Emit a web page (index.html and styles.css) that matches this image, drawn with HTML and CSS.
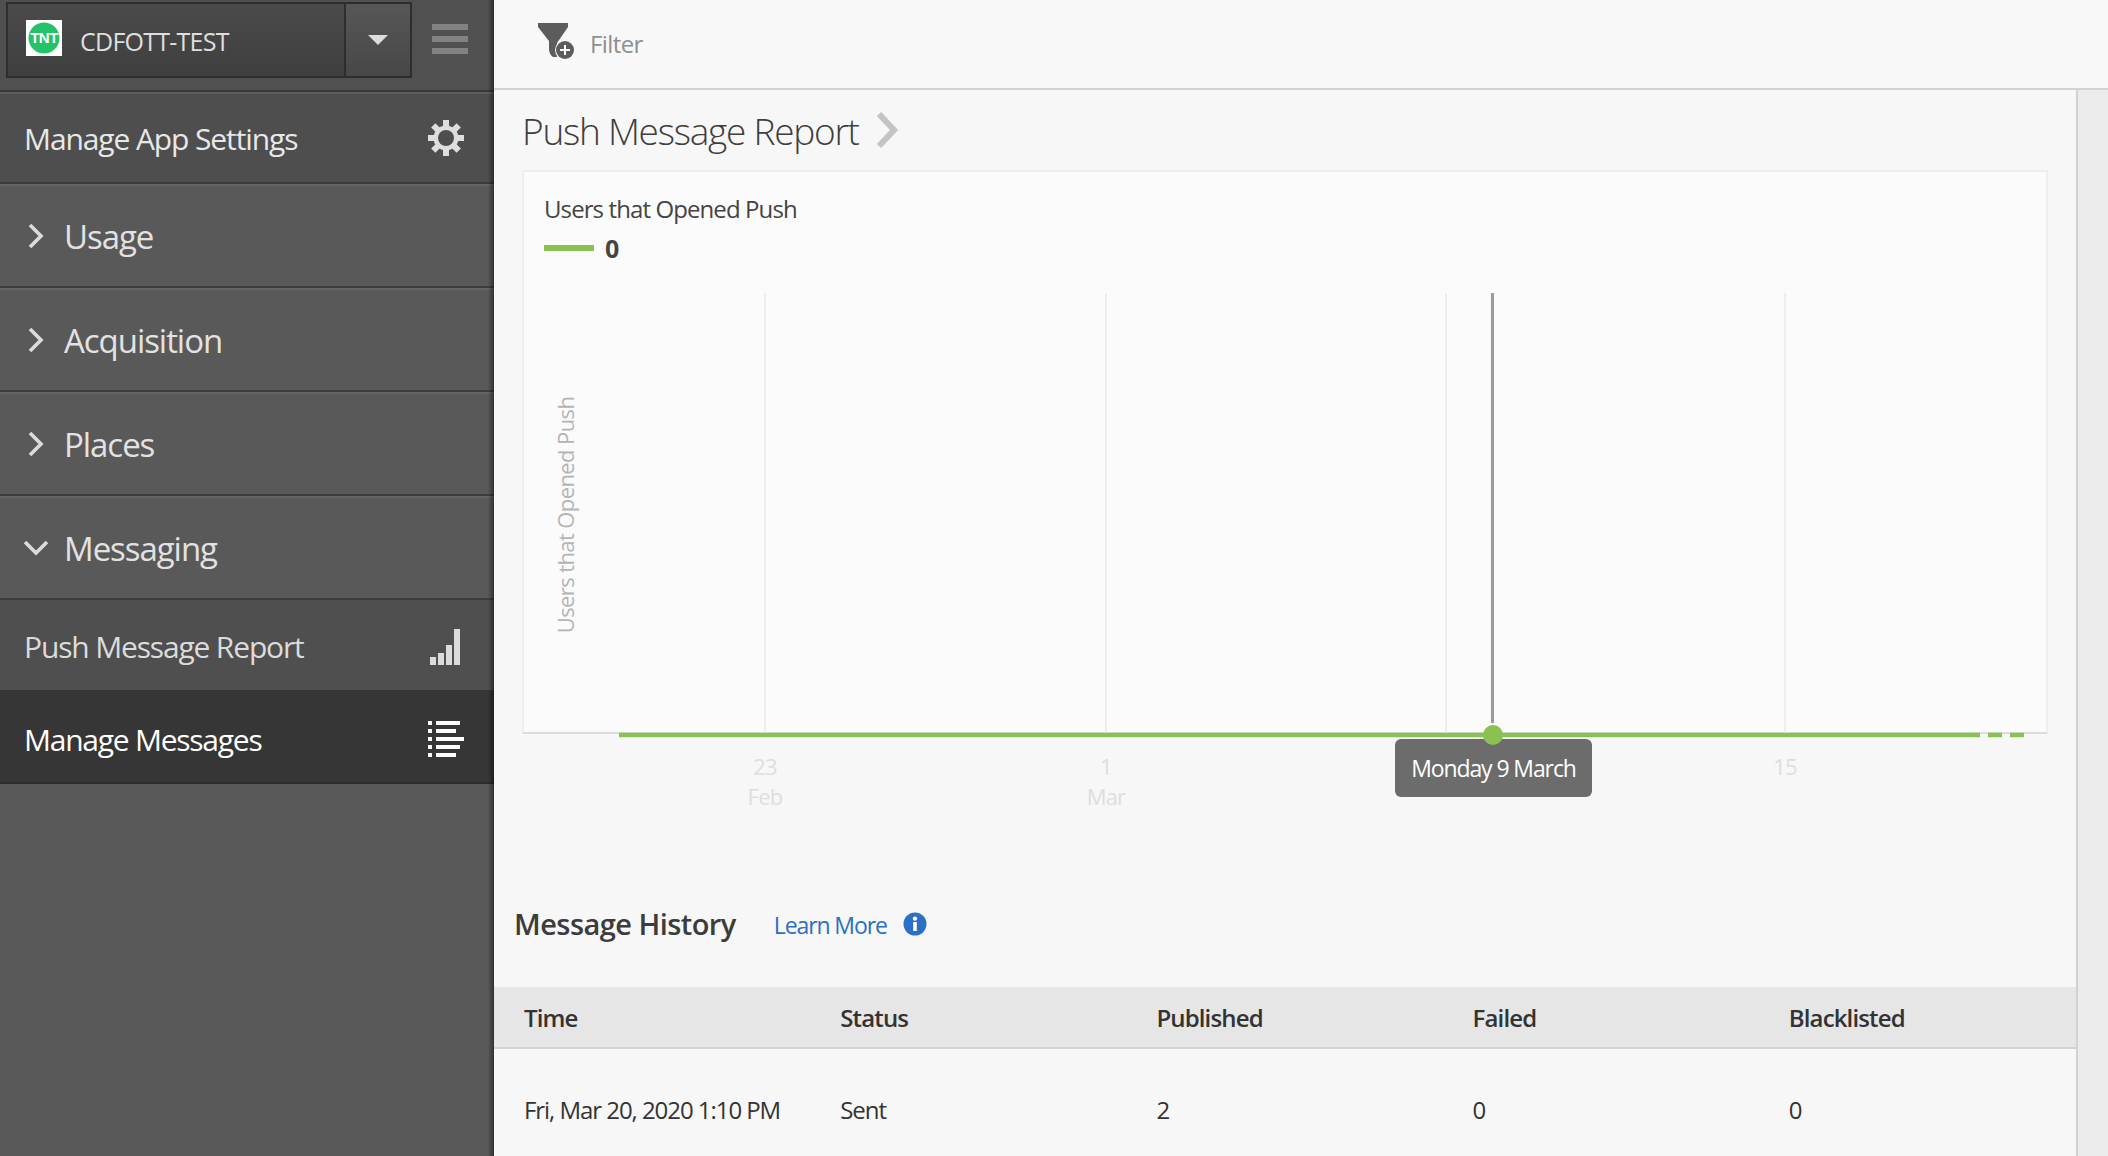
FILE: index.html
```html
<!DOCTYPE html>
<html lang="en">
<head>
<meta charset="utf-8">
<title>Push Message Report</title>
<link rel="stylesheet" href="styles.css">
</head>
<body>
<div class="app">
  <aside class="sidebar">
    <div class="side-head">
      <div class="select">
        <div class="select-value">
          <svg class="logo" viewBox="0 0 36 36"><rect width="36" height="36" fill="#fff"/><circle cx="18" cy="18" r="15.5" fill="#25c26c"/><text x="18" y="23" text-anchor="middle" class="logo-text">TNT</text></svg>
          <span class="select-name">CDFOTT-TEST</span>
        </div>
        <div class="select-btn"><svg width="20" height="10" viewBox="0 0 20 10"><path d="M0 0H20L10 10Z" fill="#dcdcdc"/></svg></div>
      </div>
      <svg class="burger" width="36" height="30" viewBox="0 0 36 30"><path d="M0 0H36V6H0ZM0 12H36V18H0ZM0 24H36V30H0Z" fill="#828282"/></svg>
    </div>
    <div class="row row-settings">
      <span>Manage App Settings</span>
      <svg class="row-icon" width="36" height="36" viewBox="0 0 36 36"><g fill="#dedede"><rect x="15" y="0" width="6" height="36"/><rect x="15" y="0" width="6" height="36" transform="rotate(45 18 18)"/><rect x="15" y="0" width="6" height="36" transform="rotate(90 18 18)"/><rect x="15" y="0" width="6" height="36" transform="rotate(135 18 18)"/></g><circle cx="18" cy="18" r="12.5" fill="#dedede"/><circle cx="18" cy="18" r="8" fill="#4e4e4e"/></svg>
    </div>
    <div class="row row-nav"><svg class="chev" width="24" height="26" viewBox="0 0 24 26"><path d="M6 2L17 13L6 24" fill="none" stroke="#dcdcdc" stroke-width="3.6"/></svg><span>Usage</span></div>
    <div class="row row-nav"><svg class="chev" width="24" height="26" viewBox="0 0 24 26"><path d="M6 2L17 13L6 24" fill="none" stroke="#dcdcdc" stroke-width="3.6"/></svg><span>Acquisition</span></div>
    <div class="row row-nav"><svg class="chev" width="24" height="26" viewBox="0 0 24 26"><path d="M6 2L17 13L6 24" fill="none" stroke="#dcdcdc" stroke-width="3.6"/></svg><span>Places</span></div>
    <div class="row row-nav"><svg class="chev" width="24" height="26" viewBox="0 0 24 26"><path d="M1 7L12 18L23 7" fill="none" stroke="#dcdcdc" stroke-width="3.6"/></svg><span>Messaging</span></div>
    <div class="row row-sub">
      <span>Push Message Report</span>
      <svg class="row-icon" width="36" height="36" viewBox="0 0 36 36"><path d="M2 28H8V36H2ZM10 24H16V36H10ZM18 16H24V36H18ZM26 0H32V36H26Z" fill="#dcdcdc"/></svg>
    </div>
    <div class="row row-active">
      <span>Manage Messages</span>
      <svg class="row-icon" width="36" height="36" viewBox="0 0 36 36"><path d="M0 0H4V4H0ZM8 0H32V4H8ZM0 8H4V12H0ZM8 8H28V12H8ZM0 16H4V20H0ZM8 16H36V20H8ZM0 24H4V28H0ZM8 24H32V28H8ZM0 32H4V36H0ZM8 32H28V36H8Z" fill="#fff"/></svg>
    </div>
  </aside>
  <div class="main">
    <header class="toolbar">
      <svg class="funnel" width="40" height="40" viewBox="0 0 40 40"><path d="M0 2H30V6L19 22V36H15Q11 33 11 28V20L0 6Z" fill="#5c5c5c"/><circle cx="27" cy="29" r="10" fill="#f8f8f8"/><circle cx="27" cy="29" r="9" fill="#5c5c5c"/><path d="M26 24H28V28H32V30H28V34H26V30H22V28H26Z" fill="#fff"/></svg>
      <span class="filter-label">Filter</span>
    </header>
    <div class="content-wrap">
      <div class="content">
        <div class="title-row">
          <h1 class="title">Push Message Report</h1>
          <svg width="24" height="36" viewBox="0 0 24 36"><path d="M4 2L19 18L4 34" fill="none" stroke="#c4c4c4" stroke-width="6"/></svg>
        </div>
        <section class="chart-card">
          <div class="card-head">
            <div class="card-title">Users that Opened Push</div>
            <div class="legend"><span class="legend-line"></span><span class="legend-value">0</span></div>
          </div>
          <div class="plot">
            <svg class="plot-svg" width="1521" height="440" viewBox="0 0 1521 440">
              <g stroke="#ededed" stroke-width="2">
                <path d="M240 0V440M581 0V440M921 0V440M1260 0V440"/>
              </g>
              <text class="axis-y" transform="translate(49 222) rotate(-90)" text-anchor="middle">Users that Opened Push</text>
              <path d="M967.5 0V430" stroke="#9a9a9a" stroke-width="3"/>
              <path d="M94 442H1455M1463 442H1477M1485 442H1499" stroke="#8bc152" stroke-width="4.5" fill="none"/>
              <g class="axis-x" text-anchor="middle">
                <text x="240" y="482">23</text><text x="240" y="512">Feb</text>
                <text x="581" y="482">1</text><text x="581" y="512">Mar</text>
                <text x="921" y="482">9</text>
                <text x="1260" y="482">15</text>
              </g>
              <rect class="tip-box" x="870" y="446" width="197" height="58" rx="6"/>
              <text class="tip-text" x="968.5" y="484" text-anchor="middle">Monday 9 March</text>
              <ellipse cx="968" cy="442" rx="10" ry="10" fill="#8bc152"/>
            </svg>
          </div>
        </section>
        <div class="history-head">
          <h2 class="history-title">Message History</h2>
          <a class="learn" href="#">Learn More</a>
          <svg width="24" height="24" viewBox="0 0 24 24"><circle cx="12" cy="12" r="11.5" fill="#2b70c6"/><rect x="10.2" y="10" width="3.6" height="9" fill="#fff"/><circle cx="12" cy="6.6" r="2.2" fill="#fff"/></svg>
        </div>
        <div class="table">
          <div class="t-row t-head"><div>Time</div><div>Status</div><div>Published</div><div>Failed</div><div>Blacklisted</div></div>
          <div class="t-row t-body"><div>Fri, Mar 20, 2020 1:10 PM</div><div>Sent</div><div>2</div><div>0</div><div>0</div></div>
        </div>
      </div>
      <div class="track"></div>
    </div>
  </div>
</div>
</body>
</html>
```
FILE: styles.css
```css
* { box-sizing: border-box; }
html, body { margin: 0; height: 100%; overflow: hidden; }
body { font-family: "Open Sans", "Noto Sans", sans-serif; color: #333; background: #f7f7f7; }
.app { display: flex; height: 1156px; }

.sidebar { position: relative; width: 494px; flex: none; background: #595959; display: flex; flex-direction: column; }
.sidebar::after { content: ""; position: absolute; top: 0; right: 0; bottom: 0; width: 6px; background: linear-gradient(to right, rgba(0,0,0,0), rgba(0,0,0,.45)); }

.side-head { height: 92px; flex: none; background: #505050; border-bottom: 2px solid #383838; display: flex; align-items: flex-start; padding: 2px 0 0 6px; }
.select { width: 406px; height: 76px; border: 2px solid #2e2e2e; display: flex; }
.select-value { flex: 1; display: flex; align-items: center; padding-left: 18px; background: linear-gradient(#4a4a4a, #3f3f3f); }
.logo { width: 36px; height: 36px; flex: none; margin-top: -4px; }
.logo-text { font: 700 15px "Liberation Sans", sans-serif; fill: #fff; letter-spacing: -.5px; }
.select-name { margin-left: 18px; padding-top: 2px; font-size: 25px; color: #dedede; letter-spacing: -.75px; }
.select-btn { width: 66px; flex: none; border-left: 2px solid #2e2e2e; background: linear-gradient(#575757, #474747); display: flex; align-items: center; justify-content: center; }
.burger { margin: 22px 0 0 20px; }

.row { display: flex; align-items: center; flex: none; }
.row-settings { height: 92px; background: #4e4e4e; border-top: 2px solid #5e5e5e; border-bottom: 2px solid #3a3a3a; padding: 0 30px 0 24px; justify-content: space-between; font-size: 30px; color: #e8e8e8; letter-spacing: -1.1px; }
.row-settings .row-icon { margin-right: 0; }
.row-nav { height: 104px; background: #595959; border-top: 2px solid #646464; border-bottom: 2px solid #3e3e3e; padding-left: 24px; font-size: 33px; color: #e2e2e2; letter-spacing: -1.05px; }
.chev { flex: none; margin-right: 16px; }
.row-sub { height: 90px; background: #4f4f4f; padding: 3px 30px 0 24px; justify-content: space-between; font-size: 30px; color: #dcdcdc; letter-spacing: -1.16px; }
.row-active { height: 94px; background: #363636; border-bottom: 2px solid #2d2d2d; padding: 6px 30px 0 24px; justify-content: space-between; font-size: 30px; color: #fff; letter-spacing: -1.25px; }

.main { flex: 1; min-width: 0; display: flex; flex-direction: column; }
.toolbar { height: 90px; flex: none; background: #f8f8f8; border-bottom: 2px solid #d2d2d2; display: flex; align-items: center; padding-left: 44px; }
.funnel { flex: none; margin-top: -7px; }
.filter-label { margin-left: 12px; margin-top: -2px; font-size: 24px; color: #8f8f8f; letter-spacing: -.6px; }

.content-wrap { flex: 1; display: flex; min-height: 0; }
.content { flex: 1; min-width: 0; background: #f7f7f7; }
.track { width: 32px; flex: none; background: #ebebeb; border-left: 2px solid #d2d2d2; }

.title-row { height: 80px; display: flex; align-items: center; padding-left: 28px; }
.title { margin: 0 16px 0 0; font-size: 37px; font-weight: 300; color: #3e3e3e; letter-spacing: -1.25px; }

.chart-card { margin-left: 28px; width: 1526px; height: 564px; background: #fbfbfb; border: 2px solid #eeeeee; border-bottom-color: #dcdcdc; }
.card-head { height: 121px; padding: 21px 0 0 20px; }
.card-title { font-size: 24px; line-height: 32px; color: #444; letter-spacing: -.9px; }
.legend { display: flex; align-items: center; margin-top: 7px; }
.legend-line { width: 50px; height: 6px; background: #8bc152; }
.legend-value { margin-left: 11px; font-size: 25px; line-height: 32px; font-weight: 700; color: #444; }
.plot { height: 439px; padding-left: 1px; }
.plot-svg { display: block; overflow: visible; }
.axis-y { font-size: 22px; fill: #b4b4b4; letter-spacing: -.6px; }
.axis-x { font-size: 22px; fill: #dedede; letter-spacing: -.8px; }
.tip-box { fill: #676767; fill-opacity: .97; }
.tip-text { font-size: 23px; fill: #fff; letter-spacing: -1.1px; }

.history-head { margin-top: 159px; display: flex; align-items: center; padding-left: 20px; height: 60px; }
.history-title { margin: 0; font-size: 29px; font-weight: 600; color: #3c3c3c; letter-spacing: -.55px; }
.learn { margin-left: 38px; margin-top: 4px; font-size: 23px; color: #2b70c0; text-decoration: none; letter-spacing: -1.1px; }
.history-head svg { margin-left: 16px; margin-top: 2px; }

.table { margin-top: 34px; }
.t-row { display: grid; grid-template-columns: repeat(5, 316.2px); }
.t-row > div { padding-left: 30px; }
.t-head { height: 62px; background: #e6e6e6; border-bottom: 2px solid #d2d2d2; align-items: center; font-size: 24px; font-weight: 600; color: #333; letter-spacing: -.85px; }
.t-body { height: 120px; align-items: center; font-size: 24px; color: #333; letter-spacing: -1.05px; }
```
